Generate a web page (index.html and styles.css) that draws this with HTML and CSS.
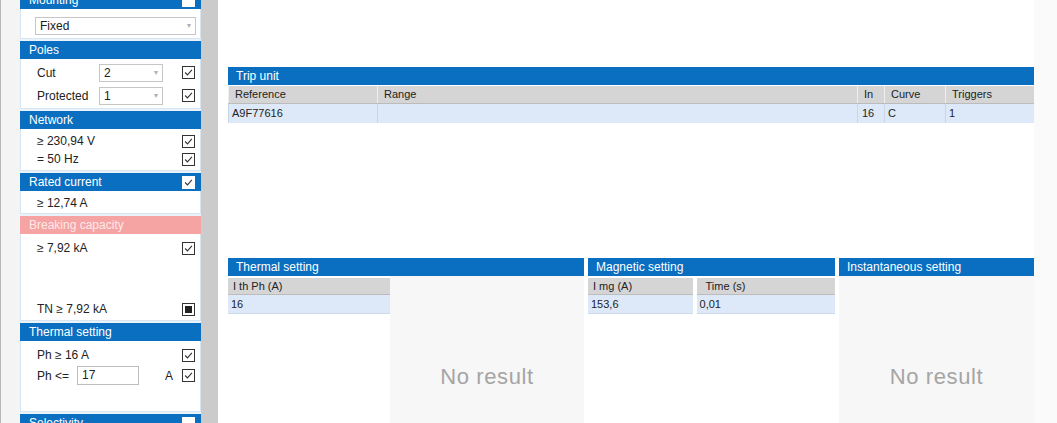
FILE: index.html
```html
<!DOCTYPE html>
<html lang="en">
<head>
  <meta charset="UTF-8">
  <meta name="viewport" content="width=device-width, initial-scale=1.0">
  <title>Circuit breaker selection</title>
  <link rel="stylesheet" href="styles.css">
</head>
<body>
  <div class="sidebar">
    <div class="filters">
      <div class="section first">
        <div class="section-head">Mounting <span class="check head-check"></span></div>
        <div class="section-body mounting">
          <div class="select wide">Fixed <span class="arrow">&#9662;</span></div>
        </div>
      </div>

      <div class="section">
        <div class="section-head">Poles</div>
        <div class="section-body poles">
          <div class="row tall">
            <span class="label">Cut</span>
            <div class="select small">2 <span class="arrow">&#9662;</span></div>
            <span class="check"><svg viewBox="0 0 13 13"><path d="M2.5 6.5 L5.3 9.3 L10.5 3.5"/></svg></span>
          </div>
          <div class="row tall">
            <span class="label">Protected</span>
            <div class="select small">1 <span class="arrow">&#9662;</span></div>
            <span class="check"><svg viewBox="0 0 13 13"><path d="M2.5 6.5 L5.3 9.3 L10.5 3.5"/></svg></span>
          </div>
        </div>
      </div>

      <div class="section">
        <div class="section-head">Network</div>
        <div class="section-body network">
          <div class="row">
            <span class="label grow">&ge; 230,94 V</span>
            <span class="check"><svg viewBox="0 0 13 13"><path d="M2.5 6.5 L5.3 9.3 L10.5 3.5"/></svg></span>
          </div>
          <div class="row">
            <span class="label grow">= 50 Hz</span>
            <span class="check"><svg viewBox="0 0 13 13"><path d="M2.5 6.5 L5.3 9.3 L10.5 3.5"/></svg></span>
          </div>
        </div>
      </div>

      <div class="section">
        <div class="section-head">Rated current <span class="check head-check"><svg viewBox="0 0 13 13"><path d="M2.5 6.5 L5.3 9.3 L10.5 3.5"/></svg></span></div>
        <div class="section-body rated">
          <div class="row tall">
            <span class="label grow">&ge; 12,74 A</span>
          </div>
        </div>
      </div>

      <div class="section">
        <div class="section-head warn">Breaking capacity</div>
        <div class="section-body breaking">
          <div class="row">
            <span class="label grow">&ge; 7,92 kA</span>
            <span class="check"><svg viewBox="0 0 13 13"><path d="M2.5 6.5 L5.3 9.3 L10.5 3.5"/></svg></span>
          </div>
          <div class="row">
            <span class="label grow">TN &ge; 7,92 kA</span>
            <span class="check"><span class="fill"></span></span>
          </div>
        </div>
      </div>

      <div class="section">
        <div class="section-head">Thermal setting</div>
        <div class="section-body thermal">
          <div class="row">
            <span class="label grow">Ph &ge; 16 A</span>
            <span class="check"><svg viewBox="0 0 13 13"><path d="M2.5 6.5 L5.3 9.3 L10.5 3.5"/></svg></span>
          </div>
          <div class="row tall">
            <span class="label short">Ph &lt;=</span>
            <div class="text-input">17</div>
            <span class="unit">A</span>
            <span class="check"><svg viewBox="0 0 13 13"><path d="M2.5 6.5 L5.3 9.3 L10.5 3.5"/></svg></span>
          </div>
        </div>
      </div>

      <div class="section">
        <div class="section-head">Selectivity <span class="check head-check"></span></div>
      </div>
    </div>
    <div class="splitter"></div>
  </div>

  <div class="main">
    <div class="content">
      <div class="panel trip">
        <div class="panel-head">Trip unit</div>
        <div class="grid">
          <div class="grid-row grid-header">
            <span class="c-ref">Reference</span>
            <span class="c-range">Range</span>
            <span class="c-in">In</span>
            <span class="c-curve">Curve</span>
            <span class="c-trig">Triggers</span>
          </div>
          <div class="grid-row grid-data">
            <span class="c-ref">A9F77616</span>
            <span class="c-range"></span>
            <span class="c-in">16</span>
            <span class="c-curve">C</span>
            <span class="c-trig">1</span>
          </div>
        </div>
      </div>

      <div class="settings">
        <div class="panel p-thermal">
          <div class="panel-head">Thermal setting</div>
          <div class="panel-body">
            <div class="col" style="width: 162px">
              <div class="cell cell-head">I th Ph (A)</div>
              <div class="cell cell-data">16</div>
            </div>
            <div class="no-result">No result</div>
          </div>
        </div>

        <div class="panel p-magnetic">
          <div class="panel-head">Magnetic setting</div>
          <div class="panel-body split">
            <div class="col" style="width: 105px">
              <div class="cell cell-head">I mg (A)</div>
              <div class="cell cell-data">153,6</div>
            </div>
            <div class="col" style="width: 139px">
              <div class="cell cell-head indent">Time (s)</div>
              <div class="cell cell-data">0,01</div>
            </div>
          </div>
        </div>

        <div class="panel p-instant">
          <div class="panel-head">Instantaneous setting</div>
          <div class="panel-body">
            <div class="no-result">No result</div>
          </div>
        </div>
      </div>
    </div>

    <div class="ruler">
      <span class="tick blue" style="top: 98px"></span>
      <span class="tick blue" style="top: 255px"></span>
      <span class="tick blue" style="top: 305px"></span>
      <span class="tick red" style="top: 388px"></span>
    </div>
  </div>
</body>
</html>
```

FILE: styles.css
```css
body {
  margin: 0;
  height: 423px;
  overflow: hidden;
  display: flex;
  font-family: "Liberation Sans", Arial, sans-serif;
  font-size: 12px;
  color: #222;
  background: #fff;
}

/* left filter column */
.sidebar {
  width: 218px;
  display: flex;
  background: #f4f4f4;
  border-left: 1px solid #b8b8b8;
  box-sizing: border-box;
}
.filters {
  width: 181px;
  margin-left: 19px;
  display: flex;
  flex-direction: column;
  gap: 2px;
  background: #eaf2fa;
}
.splitter {
  width: 17px;
  background: #cbcbcb;
}
.section.first {
  margin-top: -9px;
}
.section-head {
  height: 18px;
  line-height: 18px;
  padding: 0 6px 0 9px;
  background: #0a6fc1;
  color: #fff;
  display: flex;
  justify-content: space-between;
  align-items: center;
}
.section-head.warn {
  background: #f6a3a3;
  color: #fde9e9;
}
.section-body {
  background: #fff;
  border: 1px solid #d7e4f1;
  border-top: none;
  box-sizing: border-box;
  padding: 0 5px 0 16px;
}
.mounting { height: 30px; padding: 8px 6px 0 14px; }
.poles { height: 50px; padding-top: 2px; }
.network { height: 42px; padding-top: 3px; }
.rated { height: 23px; }
.breaking {
  height: 87px;
  padding-top: 5px;
  padding-bottom: 2px;
  display: flex;
  flex-direction: column;
  justify-content: space-between;
}
.thermal { height: 71px; padding-top: 5px; }

.row {
  height: 18px;
  display: flex;
  align-items: center;
}
.row.tall { height: 23px; }
.label { width: 62px; }
.label.grow { flex: 1; }
.label.short { width: 40px; }

.select {
  height: 18px;
  box-sizing: border-box;
  border: 1px solid #c6c6c6;
  background: #fff;
  padding: 0 4px;
  line-height: 16px;
  display: flex;
  justify-content: space-between;
}
.select.wide { width: 161px; }
.select.small { width: 64px; margin-right: auto; }
.arrow {
  color: #b0b0b0;
  font-size: 8px;
}
.text-input {
  width: 62px;
  height: 19px;
  box-sizing: border-box;
  border: 1px solid #bdbdbd;
  padding: 0 4px;
  line-height: 17px;
}
.unit {
  margin-left: auto;
  margin-right: 9px;
}

.check {
  width: 13px;
  height: 13px;
  box-sizing: border-box;
  border: 1px solid #333;
  background: #fff;
  display: flex;
  align-items: center;
  justify-content: center;
}
.check svg {
  width: 11px;
  height: 11px;
}
.check path {
  fill: none;
  stroke: #333;
  stroke-width: 1.3;
}
.head-check {
  border-color: #fff;
}
.check .fill {
  width: 7px;
  height: 7px;
  background: #222;
}

/* main area */
.main {
  flex: 1;
  display: flex;
  background: #fff;
}
.content {
  width: 806px;
  padding: 67px 0 0 10px;
}
.ruler {
  position: relative;
  width: 23px;
  background: #fafafa;
  border-right: 1px solid #9a9a9a;
  margin-right: 2px;
}
.tick {
  position: absolute;
  right: -3px;
  width: 3px;
  height: 12px;
  border-top: 2px dotted #3a78b0;
  border-bottom: 2px dotted #3a78b0;
  box-sizing: border-box;
}
.tick.red {
  height: 8px;
  border-color: #8a1a1a;
}

.panel-head {
  height: 18px;
  line-height: 18px;
  padding-left: 8px;
  background: #0a6fc1;
  color: #fff;
}

.grid {
  margin-top: 1px;
  font-size: 11px;
}
.grid-row {
  display: flex;
}
.grid-row span {
  box-sizing: border-box;
}
.grid-header {
  height: 17px;
  line-height: 17px;
  background: #d5d5d5;
  border-bottom: 1px solid #bcbcbc;
}
.grid-header span {
  border-left: 1px solid #efefef;
  padding-left: 6px;
}
.grid-data {
  height: 19px;
  line-height: 19px;
  background: #dde9f8;
}
.grid-data span {
  border-left: 1px solid #c8d6e6;
  padding-left: 3px;
}
.grid-data .c-in { padding-left: 4px; }
.c-ref { width: 149px; }
.c-range { width: 480px; }
.c-in { width: 27px; }
.c-curve { width: 61px; }
.c-trig { width: 89px; }

.settings {
  margin-top: 135px;
  display: flex;
  gap: 4px;
}
.p-thermal { width: 356px; }
.p-magnetic { width: 247px; }
.p-instant { width: 195px; }
.panel-body {
  display: flex;
  height: 147px;
}
.panel-body.split {
  gap: 4px;
}
.col {
  padding-top: 2px;
  font-size: 11px;
}
.cell {
  box-sizing: border-box;
  padding-left: 5px;
}
.cell-head {
  height: 17px;
  line-height: 17px;
  background: #d5d5d5;
  border-bottom: 1px solid #bcbcbc;
}
.cell-head.indent { padding-left: 9px; }
.cell-data {
  height: 19px;
  line-height: 19px;
  background: #dde9f8;
  padding-left: 3px;
  border-bottom: 1px solid #cfdbea;
}
.no-result {
  flex: 1;
  background: #f7f7f7;
  color: #a5a5a5;
  font-size: 22px;
  letter-spacing: 0.6px;
  text-align: center;
  padding-top: 88px;
}
```
